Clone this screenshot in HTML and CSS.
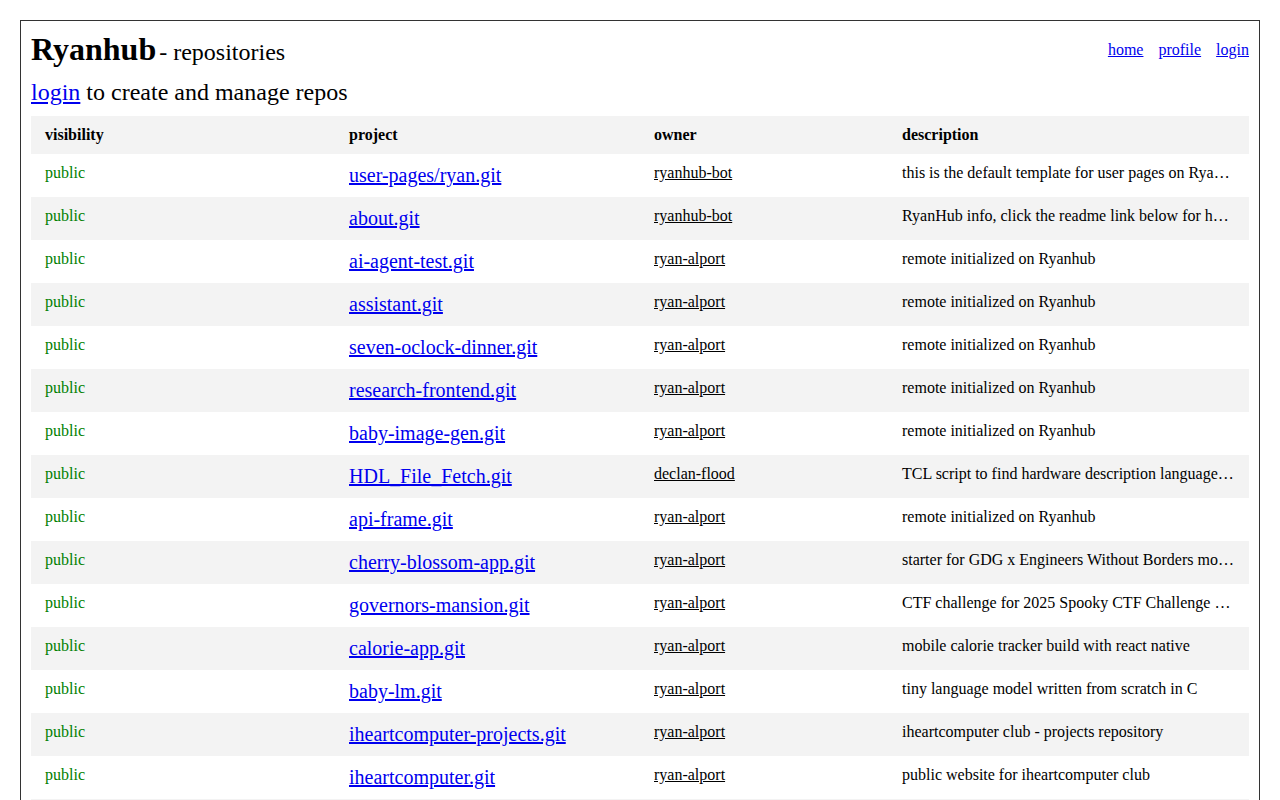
FILE: index.html
```html
<!DOCTYPE html>
<html lang="en">
<head>
    <meta charset="UTF-8">
    <title>Ryanhub - repositories</title>
    <link rel="stylesheet" href="styles.css">
</head>
<body>
    <div class="page">
        <div class="top">
            <h1>Ryanhub<span class="sub">- repositories</span></h1>
            <nav class="nav">
                <a href="#">home</a>
                <a href="#">profile</a>
                <a href="#">login</a>
            </nav>
        </div>
        <p class="hint"><a href="#">login</a> to create and manage repos</p>

        <table class="repos">
            <colgroup>
                <col class="c-vis"><col class="c-proj"><col class="c-owner"><col class="c-desc">
            </colgroup>
            <thead>
                <tr><th>visibility</th><th>project</th><th>owner</th><th>description</th></tr>
            </thead>
            <tbody>
                <tr><td class="vis">public</td><td><a class="proj" href="#">user-pages/ryan.git</a></td><td><a class="owner" href="#">ryanhub-bot</a></td><td class="desc">this is the default template for user pages on RyanHub, edit it to make it your own</td></tr>
                <tr><td class="vis">public</td><td><a class="proj" href="#">about.git</a></td><td><a class="owner" href="#">ryanhub-bot</a></td><td class="desc">RyanHub info, click the readme link below for how to use it</td></tr>
                <tr><td class="vis">public</td><td><a class="proj" href="#">ai-agent-test.git</a></td><td><a class="owner" href="#">ryan-alport</a></td><td class="desc">remote initialized on Ryanhub</td></tr>
                <tr><td class="vis">public</td><td><a class="proj" href="#">assistant.git</a></td><td><a class="owner" href="#">ryan-alport</a></td><td class="desc">remote initialized on Ryanhub</td></tr>
                <tr><td class="vis">public</td><td><a class="proj" href="#">seven-oclock-dinner.git</a></td><td><a class="owner" href="#">ryan-alport</a></td><td class="desc">remote initialized on Ryanhub</td></tr>
                <tr><td class="vis">public</td><td><a class="proj" href="#">research-frontend.git</a></td><td><a class="owner" href="#">ryan-alport</a></td><td class="desc">remote initialized on Ryanhub</td></tr>
                <tr><td class="vis">public</td><td><a class="proj" href="#">baby-image-gen.git</a></td><td><a class="owner" href="#">ryan-alport</a></td><td class="desc">remote initialized on Ryanhub</td></tr>
                <tr><td class="vis">public</td><td><a class="proj" href="#">HDL_File_Fetch.git</a></td><td><a class="owner" href="#">declan-flood</a></td><td class="desc">TCL script to find hardware description language files in a project</td></tr>
                <tr><td class="vis">public</td><td><a class="proj" href="#">api-frame.git</a></td><td><a class="owner" href="#">ryan-alport</a></td><td class="desc">remote initialized on Ryanhub</td></tr>
                <tr><td class="vis">public</td><td><a class="proj" href="#">cherry-blossom-app.git</a></td><td><a class="owner" href="#">ryan-alport</a></td><td class="desc">starter for GDG x Engineers Without Borders mobile app</td></tr>
                <tr><td class="vis">public</td><td><a class="proj" href="#">governors-mansion.git</a></td><td><a class="owner" href="#">ryan-alport</a></td><td class="desc">CTF challenge for 2025 Spooky CTF Challenge event</td></tr>
                <tr><td class="vis">public</td><td><a class="proj" href="#">calorie-app.git</a></td><td><a class="owner" href="#">ryan-alport</a></td><td class="desc">mobile calorie tracker build with react native</td></tr>
                <tr><td class="vis">public</td><td><a class="proj" href="#">baby-lm.git</a></td><td><a class="owner" href="#">ryan-alport</a></td><td class="desc">tiny language model written from scratch in C</td></tr>
                <tr><td class="vis">public</td><td><a class="proj" href="#">iheartcomputer-projects.git</a></td><td><a class="owner" href="#">ryan-alport</a></td><td class="desc">iheartcomputer club - projects repository</td></tr>
                <tr><td class="vis">public</td><td><a class="proj" href="#">iheartcomputer.git</a></td><td><a class="owner" href="#">ryan-alport</a></td><td class="desc">public website for iheartcomputer club</td></tr>
                <tr><td class="vis">public</td><td><a class="proj" href="#">dotfiles.git</a></td><td><a class="owner" href="#">ryan-alport</a></td><td class="desc">remote initialized on Ryanhub</td></tr>
            </tbody>
        </table>
    </div>
</body>
</html>
```

FILE: styles.css
```css
body { font-family: "Liberation Serif", "Times New Roman", serif; margin: 20px; color: #000; }
a { color: #0000ee; }

.page { border: 1px solid #333; padding: 10px; }

.top { display: flex; justify-content: space-between; align-items: center; }
h1 { font-size: 32px; margin: 0; }
h1 .sub { font-size: 24px; font-weight: normal; margin-left: 3px; }
.nav { display: flex; gap: 15px; font-size: 16px; }

.hint { font-size: 24px; margin: 11px 0 10px; }

.repos { width: 100%; border-collapse: collapse; table-layout: fixed; }
.c-vis { width: 304px; }
.c-proj { width: 305px; }
.c-owner { width: 248px; }
.repos th, .repos td { text-align: left; vertical-align: top; padding: 10px 14px; font-size: 16px; }
.repos thead tr { background: #f3f3f3; }
.repos tbody tr:nth-child(even) { background: #f3f3f3; }

.vis { color: green; }
.proj { font-size: 20px; }
.owner { color: #000; font-size: 16px; }
.desc { white-space: nowrap; overflow: hidden; text-overflow: ellipsis; }
```
